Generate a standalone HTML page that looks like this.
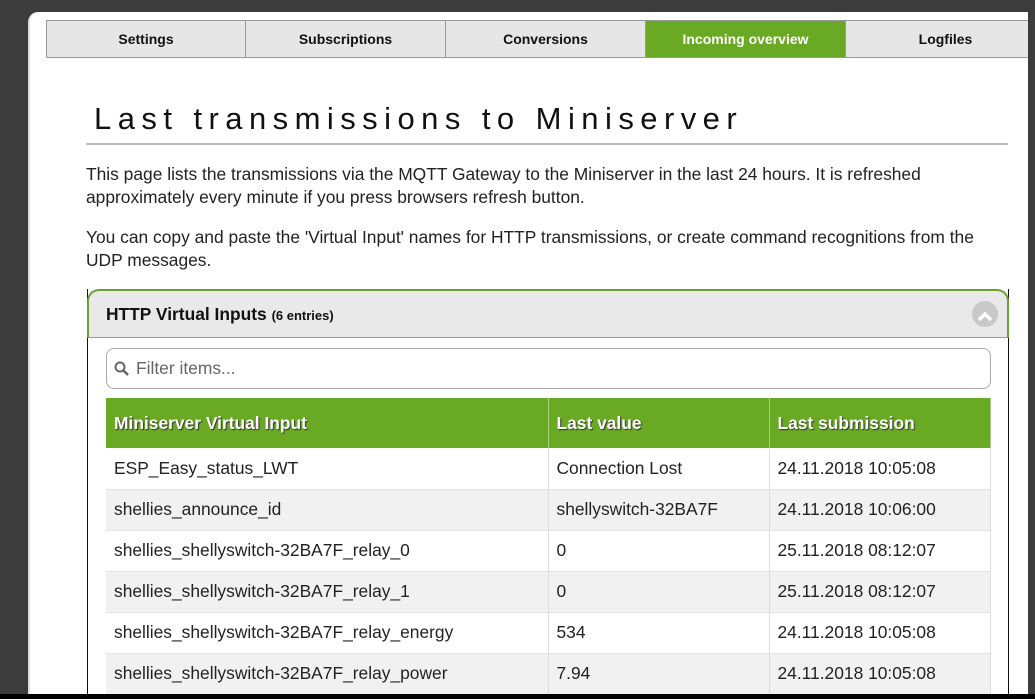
<!DOCTYPE html>
<html><head><style>
*{box-sizing:border-box;margin:0;padding:0}
body{width:1035px;height:699px;overflow:hidden;background:#3c3c3c;font-family:"Liberation Sans",sans-serif;position:relative}
#dlg{position:absolute;left:28px;top:12px;width:1000px;height:682px;background:#fff;border-radius:10px 0 0 0;border-left:2px solid #ddd;overflow:hidden}
.tabs{position:absolute;left:16px;top:8px;height:38px;display:flex}
.tab{width:200px;height:38px;background:#e6e6e6;border:1px solid #999;border-left:none;font-weight:bold;font-size:14px;text-align:center;line-height:36px;color:#111}
.tab:first-child{border-left:1px solid #999}
.tab.on{background:#6aa923;color:#fff;border-color:#999}
h1{position:absolute;left:64px;top:89px;font-weight:normal;font-size:31px;letter-spacing:6.45px;color:#111}
.hr{position:absolute;left:56px;top:131px;width:922px;height:2px;background:#bbb}
p{position:absolute;left:56px;width:900px;font-size:17.4px;line-height:23px;color:#222}
.panel{position:absolute;left:57px;top:277px;width:922px;height:420px;border-left:1px solid #111;border-right:1px solid #111}
.ph{height:49px;background:#e9e9e9;border:2px solid #6e9f35;border-bottom:1px solid #999;border-radius:12px 12px 0 0;margin:0 -1px;font-weight:bold;font-size:17.4px;line-height:46px;padding-left:17px;color:#111}
.ph small{font-size:13px}
.cir{position:absolute;right:10px;top:12px;width:26px;height:26px;border-radius:50%;background:#c9c9c9}
.filt{position:absolute;left:18px;top:59px;width:885px;height:41px;border:1px solid #aaa;border-radius:8px;font-size:17.4px;color:#666;line-height:39px;padding-left:29px}
table{position:absolute;left:18px;top:109px;width:885px;border-collapse:collapse;font-size:17.4px;color:#222}
th{background:#6aa923;color:#fff;text-align:left;height:50px;padding-left:8px;font-size:17.4px;text-shadow:1px 1px 1px #333;border-right:1px solid #a8d080}
td{height:41px;padding-left:8px;border-right:1px solid #ddd;border-bottom:1px solid #e2e2e2}
tr:nth-child(odd) td{background:#f1f1f1}
</style></head><body>
<div style="position:absolute;left:0;bottom:0;width:1035px;height:5px;background:#000"></div>
<div id="dlg">
<div class="tabs"><div class="tab">Settings</div><div class="tab">Subscriptions</div><div class="tab">Conversions</div><div class="tab on">Incoming overview</div><div class="tab">Logfiles</div></div>
<h1>Last transmissions to Miniserver</h1>
<div class="hr"></div>
<p style="top:151px">This page lists the transmissions via the MQTT Gateway to the Miniserver in the last 24 hours. It is refreshed approximately every minute if you press browsers refresh button.</p>
<p style="top:214px">You can copy and paste the 'Virtual Input' names for HTTP transmissions, or create command recognitions from the UDP messages.</p>
<div class="panel">
<div class="ph">HTTP Virtual Inputs <small>(6 entries)</small><div class="cir"><svg width="26" height="26"><path d="M7 16 L13 10 L19 16" stroke="#fff" stroke-width="3.5" fill="none"/></svg></div></div>
<div class="filt"><svg style="position:absolute;left:7px;top:12px" width="16" height="16"><circle cx="6" cy="6" r="4.5" stroke="#666" stroke-width="2" fill="none"/><path d="M9.5 9.5 L14 14" stroke="#666" stroke-width="2.5"/></svg>Filter items...</div>
<table>
<tr><th style="width:442px">Miniserver Virtual Input</th><th style="width:221px">Last value</th><th>Last submission</th></tr>
<tr><td>ESP_Easy_status_LWT</td><td>Connection Lost</td><td>24.11.2018 10:05:08</td></tr>
<tr><td>shellies_announce_id</td><td>shellyswitch-32BA7F</td><td>24.11.2018 10:06:00</td></tr>
<tr><td>shellies_shellyswitch-32BA7F_relay_0</td><td>0</td><td>25.11.2018 08:12:07</td></tr>
<tr><td>shellies_shellyswitch-32BA7F_relay_1</td><td>0</td><td>25.11.2018 08:12:07</td></tr>
<tr><td>shellies_shellyswitch-32BA7F_relay_energy</td><td>534</td><td>24.11.2018 10:05:08</td></tr>
<tr><td>shellies_shellyswitch-32BA7F_relay_power</td><td>7.94</td><td>24.11.2018 10:05:08</td></tr>
</table>
</div>
</div>
</body></html>
